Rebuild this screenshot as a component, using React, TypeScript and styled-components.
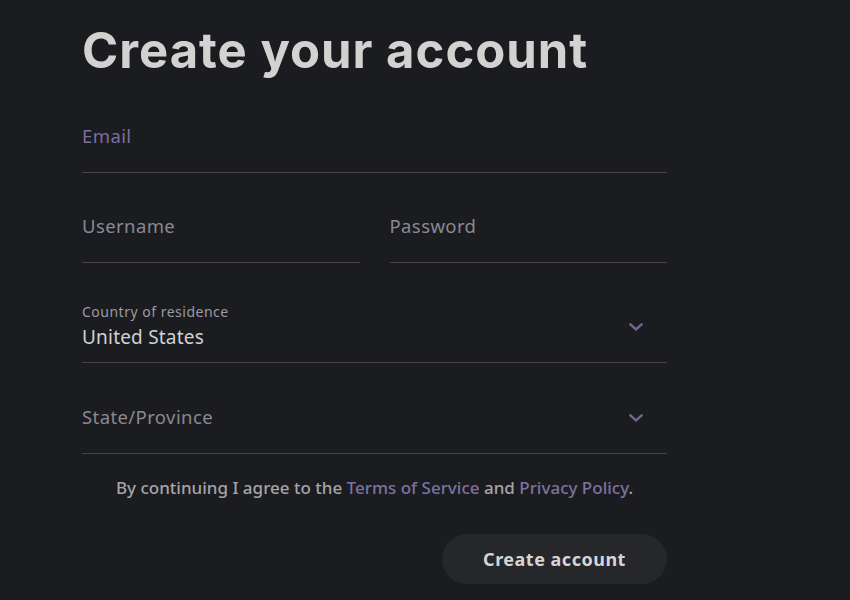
import React from "react";
import styled, { createGlobalStyle } from "styled-components";

const Global = createGlobalStyle`
  html, body { margin: 0; padding: 0; background: #1b1c1f; }
  body { font-family: "Noto Sans", "Open Sans", sans-serif; }
  * { box-sizing: border-box; }
`;

const Page = styled.div`
  width: 850px;
  height: 600px;
  background: #1b1c1f;
  overflow: hidden;
`;

const Form = styled.div`
  width: 585px;
  margin-left: 82px;
  display: flex;
  flex-direction: column;
`;

const Title = styled.h1`
  margin: 19px 0 0 0;
  height: 64px;
  font-family: Inter, sans-serif;
  font-weight: 700;
  font-size: 49px;
  line-height: 64px;
  letter-spacing: 1px;
  color: #d3d2d0;
`;

const Row = styled.div`
  display: grid;
  grid-template-columns: 1fr 1fr;
  gap: 30px;
`;

const Field = styled.div<{ $h: number; $pb: number }>`
  height: ${(p) => p.$h}px;
  padding-bottom: ${(p) => p.$pb}px;
  border-bottom: 1px solid #46414a;
  display: flex;
  align-items: flex-end;
  justify-content: space-between;
`;

const Placeholder = styled.span<{ $accent?: boolean }>`
  font-size: 18.5px;
  line-height: 24px;
  letter-spacing: 0.4px;
  color: ${(p) => (p.$accent ? "#7a6f9c" : "#8b8892")};
`;

const Stack = styled.div`
  display: flex;
  flex-direction: column;
  gap: 4px;
`;

const SmallLabel = styled.span`
  font-size: 14px;
  line-height: 18px;
  letter-spacing: 0.5px;
  color: #9d99a3;
`;

const Value = styled.span`
  font-size: 19px;
  line-height: 24px;
  letter-spacing: 0.2px;
  color: #d2d1d3;
`;

const Chevron = styled.svg<{ $mb: number }>`
  width: 14px;
  height: 8px;
  margin-right: 24px;
  margin-bottom: ${(p) => p.$mb}px;
  flex: none;
`;

const Terms = styled.p`
  margin: 22px 0 0 0;
  text-align: center;
  font-size: 17px;
  line-height: 24px;
  font-weight: 500;
  color: #a6a4a8;
`;

const Link = styled.a`
  color: #7d729f;
  text-decoration: none;
`;

const Actions = styled.div`
  display: flex;
  justify-content: flex-end;
  margin-top: 34px;
`;

const Button = styled.button`
  width: 225px;
  height: 50px;
  border: none;
  border-radius: 25px;
  background: #26272b;
  color: #d6d5d3;
  font-family: "Noto Sans", sans-serif;
  font-weight: 700;
  font-size: 18px;
  letter-spacing: 0.5px;
`;

const Down = ({ mb }: { mb: number }) => (
  <Chevron $mb={mb} viewBox="0 0 14 8">
    <path d="M1.5 1.5 L7 6.5 L12.5 1.5" fill="none" stroke="#6e6590" strokeWidth="2.4" strokeLinecap="square" />
  </Chevron>
);

export default function App() {
  return (
    <Page>
      <Global />
      <Form>
        <Title>Create your account</Title>
        <Field $h={90} $pb={24}>
          <Placeholder $accent>Email</Placeholder>
        </Field>
        <Row>
          <Field $h={90} $pb={24}>
            <Placeholder>Username</Placeholder>
          </Field>
          <Field $h={90} $pb={24}>
            <Placeholder>Password</Placeholder>
          </Field>
        </Row>
        <Field $h={100} $pb={13}>
          <Stack>
            <SmallLabel>Country of residence</SmallLabel>
            <Value>United States</Value>
          </Stack>
          <Down mb={18} />
        </Field>
        <Field $h={91} $pb={24}>
          <Placeholder>State/Province</Placeholder>
          <Down mb={7} />
        </Field>
        <Terms>
          By continuing I agree to the <Link>Terms of Service</Link> and{" "}
          <Link>Privacy Policy</Link>.
        </Terms>
        <Actions>
          <Button>Create account</Button>
        </Actions>
      </Form>
    </Page>
  );
}
